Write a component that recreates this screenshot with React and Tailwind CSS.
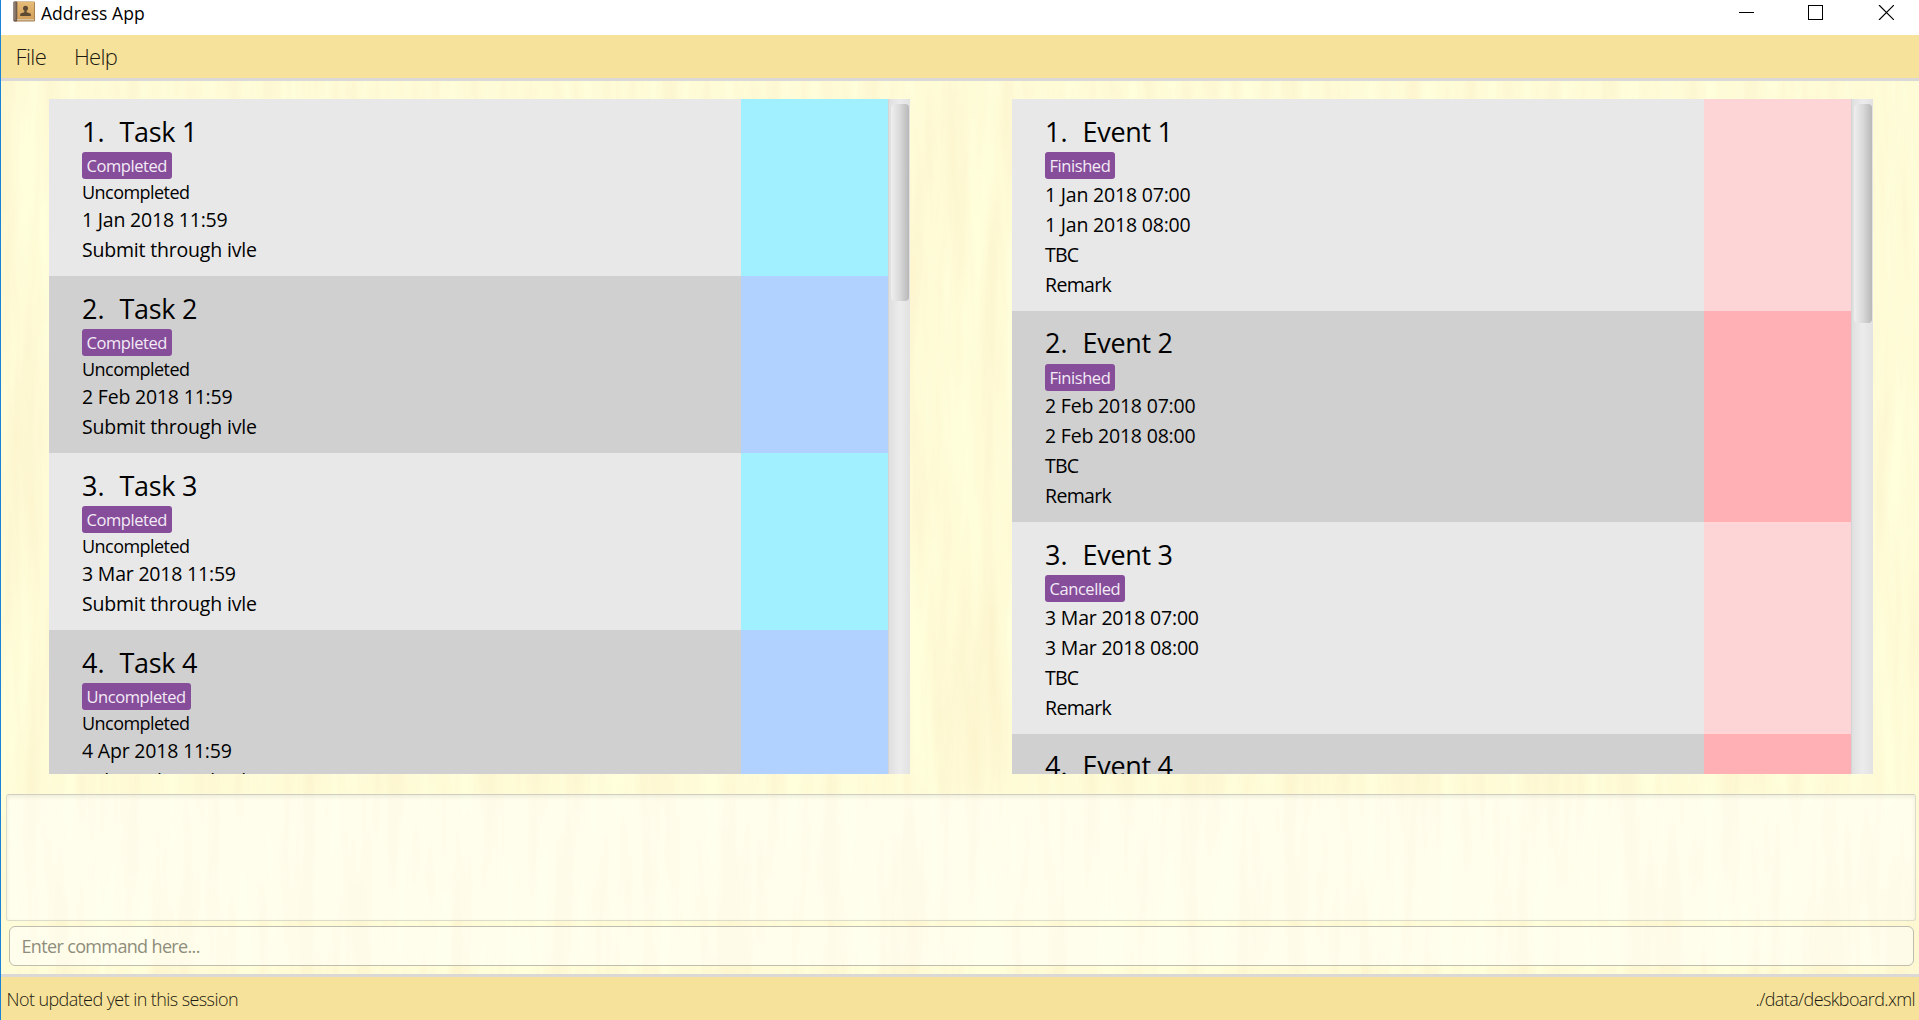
const tasks = [
  { name: "Task 1", tag: "Completed", date: "1 Jan 2018 11:59" },
  { name: "Task 2", tag: "Completed", date: "2 Feb 2018 11:59" },
  { name: "Task 3", tag: "Completed", date: "3 Mar 2018 11:59" },
  { name: "Task 4", tag: "Uncompleted", date: "4 Apr 2018 11:59" },
];

const events = [
  { name: "Event 1", tag: "Finished", day: "1 Jan 2018" },
  { name: "Event 2", tag: "Finished", day: "2 Feb 2018" },
  { name: "Event 3", tag: "Cancelled", day: "3 Mar 2018" },
  { name: "Event 4" },
];

function BookIcon() {
  return (
    <svg className="mr-[6px] h-[21px] w-[22px]" viewBox="0 0 22 21">
      <defs>
        <linearGradient id="cover" x1="0" y1="0" x2="0" y2="1">
          <stop offset="0" stopColor="#e6bc78" />
          <stop offset="1" stopColor="#d3a05a" />
        </linearGradient>
      </defs>
      <rect x="1" y="0.5" width="21" height="20" rx="1.2" fill="#a9824f" />
      <rect x="0.3" y="0.5" width="4" height="20" rx="1" fill="#6f5b4e" />
      <rect x="1.4" y="1" width="1" height="18" fill="#a3948a" />
      <rect x="4.5" y="1" width="16.5" height="17.5" fill="url(#cover)" />
      <rect x="4" y="18.3" width="17" height="1" fill="#e9dcc4" />
      <circle cx="12.5" cy="7.3" r="2.5" fill="#5c4a33" />
      <path d="M11.4 8.5h2.2v2.7l3.8 1.4q.5.3.5 2.3H7.1q0-2 .5-2.3l3.8-1.4z" fill="#5c4a33" />
    </svg>
  );
}

function WoodGrain() {
  return (
    <svg className="absolute inset-0 h-full w-full" aria-hidden="true">
      <filter id="grain" x="0" y="0" width="100%" height="100%" colorInterpolationFilters="sRGB">
        <feTurbulence type="fractalNoise" baseFrequency="0.05 0.004" numOctaves="4" seed="11" />
        <feColorMatrix values="0 0 0 0 0.985  0 0 0 0 0.94  0 0 0 0 0.78  1.1 0 0 0 -0.28" />
      </filter>
      <rect width="100%" height="100%" filter="url(#grain)" />
    </svg>
  );
}

function Card({ index, item, accent, accentAlt, children }) {
  const odd = index % 2 === 1;
  return (
    <li className={`flex shrink-0 ${odd ? "bg-[#d0d0d0]" : "bg-[#e8e8e8]"}`}>
      <div className="min-w-0 flex-1 pl-[33px] pt-[14.5px] text-[19.5px] leading-[30px] text-black">
        <div className="flex h-[38.5px] text-[27px] leading-[36px]">
          <span className="w-[37.5px]">{index + 1}.</span>
          <span className="tracking-[-0.3px]">{item.name}</span>
        </div>
        {item.tag && (
          <div className="flex">
            <span className="h-[27px] rounded-[3px] bg-[#864d9a] pl-[4.5px] pr-[5px] text-[16.5px] leading-[27px] tracking-[-0.43px] text-[#f3ebf6]">
              {item.tag}
            </span>
          </div>
        )}
        {children}
      </div>
      <div className={`w-[147.5px] ${odd ? accentAlt : accent}`} />
    </li>
  );
}

function Panel({ children, thumb }) {
  return (
    <section className="flex h-[675px] w-[861px] overflow-hidden">
      <ul className="flex flex-1 flex-col">{children}</ul>
      <div className="w-[22px] border-l border-[#d4d4d4] bg-linear-to-r from-[#dfdfdf] via-[#ececec] to-[#e2e2e2] pl-[2px] pt-[5px]">
        <div className={`w-[18px] rounded-[4px] bg-linear-to-r from-[#efefef] via-[#d9d9d9] to-[#b8b8b8] ${thumb}`} />
      </div>
    </section>
  );
}

export default function App() {
  return (
    <div className="flex h-[1020px] w-full flex-col overflow-hidden border-l border-[#1883d7] bg-white font-['Open_Sans',sans-serif]">
      <header className="flex h-[35px] shrink-0 items-start justify-between pl-3">
        <div className="flex pt-[1px]">
          <BookIcon />
          <span className="text-[17.5px] leading-[24px] tracking-[0.05px] text-black">Address App</span>
        </div>
        <svg className="mr-[25px] mt-[5px] h-[15px] w-[155px]" viewBox="0 0 155 15" fill="none" stroke="#000" shapeRendering="crispEdges">
          <path d="M0 7.5h15M69.5 0.5h14v14h-14z" />
          <path d="M140 0l15 15M155 0l-15 15" shapeRendering="auto" strokeWidth="1.2" />
        </svg>
      </header>

      <nav className="flex h-[46px] shrink-0 border-b-[3px] border-[#dbd9d8] bg-[#f6e29a] pl-[14.5px] text-[22px] font-light leading-[43px] text-[#1c1a12]">
        <span className="w-[58.5px] tracking-[-0.6px]">File</span>
        <span className="tracking-[-0.7px]">Help</span>
      </nav>

      <main className="relative flex min-h-0 flex-1 flex-col bg-[#ffffdc]">
        <WoodGrain />
        <div className="relative flex justify-between pb-5 pl-12 pr-[46px] pt-[18px]">
          <Panel thumb="h-[197px]">
            {tasks.map((t, i) => (
              <Card key={t.name} index={i} item={t} accent="bg-[#a1f0ff]" accentAlt="bg-[#b1d1ff]">
                <p className="h-[25.5px] text-[18px] leading-[27px] tracking-[-0.55px]">Uncompleted</p>
                <p className="tracking-[-0.2px]">{t.date}</p>
                <p className="mb-[11.5px] tracking-[-0.19px]">Submit through ivle</p>
              </Card>
            ))}
          </Panel>
          <Panel thumb="h-[219px]">
            {events.map((e, i) => (
              <Card key={e.name} index={i} item={e} accent="bg-[#fdd5d6]" accentAlt="bg-[#ffb0b4]">
                {e.day && (
                  <div className="pb-[11.1px] pt-[0.5px]">
                    <p className="tracking-[-0.2px]">{e.day} 07:00</p>
                    <p className="tracking-[-0.2px]">{e.day} 08:00</p>
                    <p className="tracking-[-0.8px]">TBC</p>
                    <p className="tracking-[-0.65px]">Remark</p>
                  </div>
                )}
              </Card>
            ))}
          </Panel>
        </div>
        <div className="relative ml-[5px] mr-[3px] h-[127px] rounded-[3px] border border-[#dddccb] border-t-[#cfcec0] bg-white/50 shadow-[inset_0_2px_4px_rgba(0,0,0,0.07)]" />
        <div className="relative ml-2 mr-[5px] mt-[5px] h-10 rounded-[6px] border border-[#bebdae] bg-white/50 pl-[11.5px] text-[18px] leading-[38px] tracking-[-0.65px] text-[#8e8d7c]">
          Enter command here...
        </div>
      </main>

      <footer className="flex h-[46px] shrink-0 justify-between border-t-[3px] border-[#dbd9d8] bg-[#f6e29a] pl-[5.5px] pr-1 text-[18px] font-light leading-[44px] text-[#1c1a12]">
        <span className="tracking-[-0.58px]">Not updated yet in this session</span>
        <span className="tracking-[-0.62px]">./data/deskboard.xml</span>
      </footer>
    </div>
  );
}
